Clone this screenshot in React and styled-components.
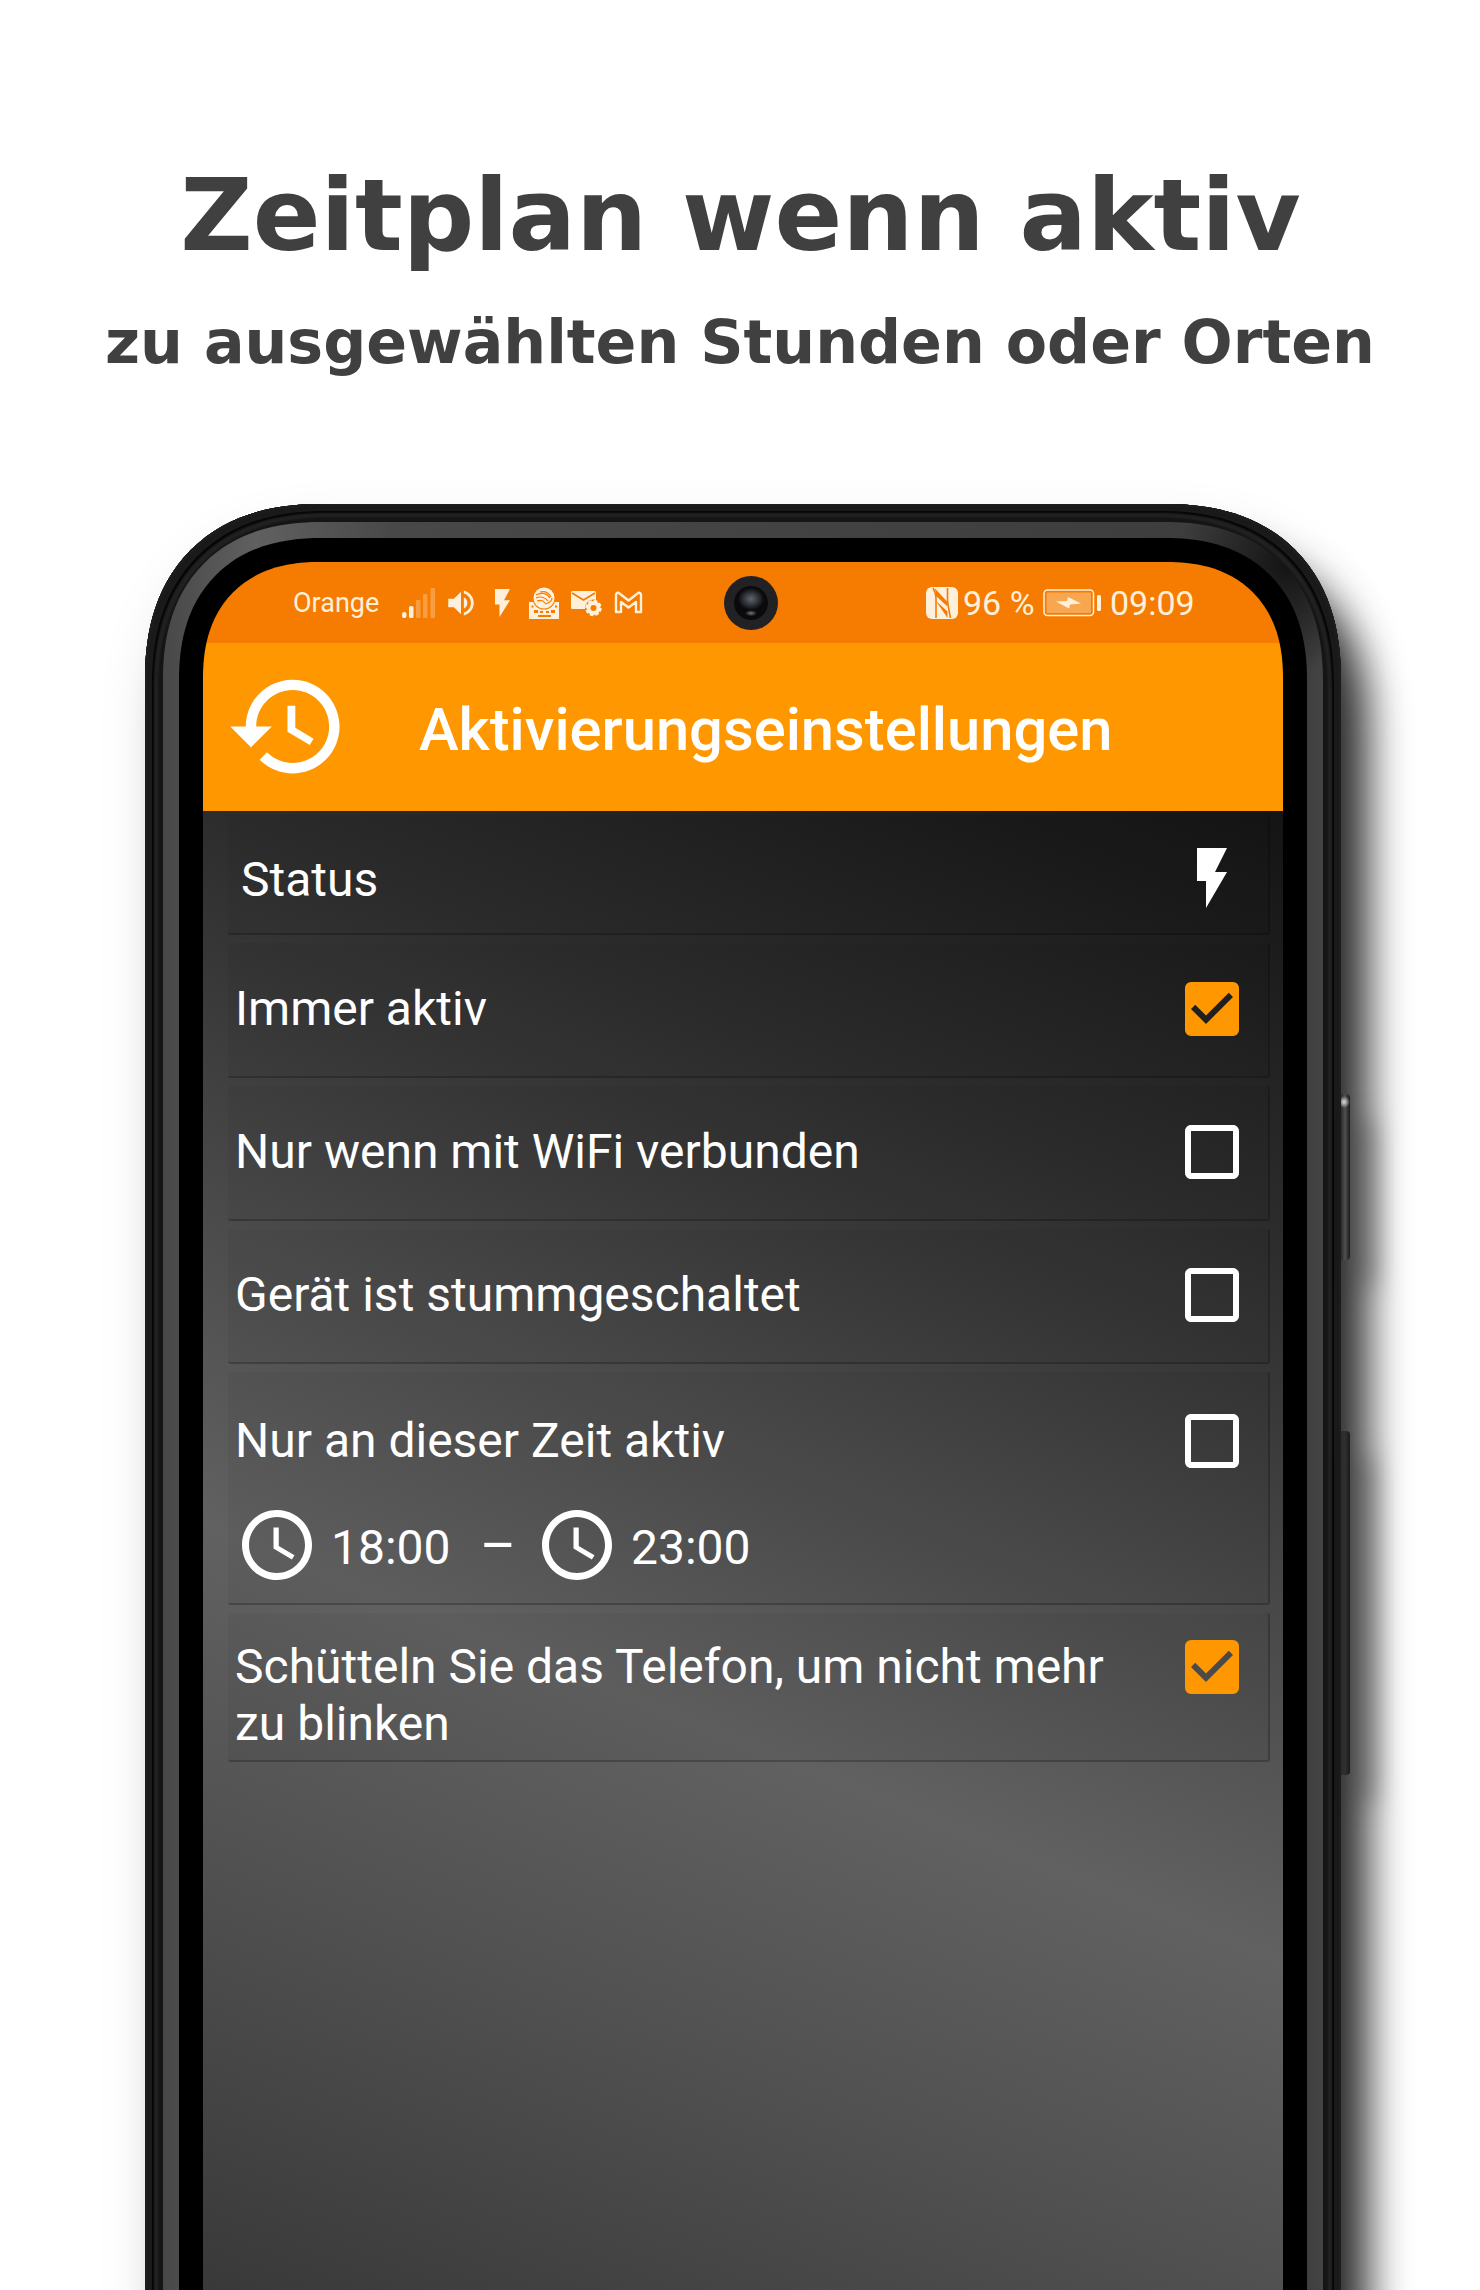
import styled, { createGlobalStyle, css } from 'styled-components';
import {
  MdCheckBox,
  MdCheckBoxOutlineBlank,
  MdVolumeUp,
} from 'react-icons/md';

const GlobalStyle = createGlobalStyle`
  * {
    box-sizing: border-box;
  }

  body {
    margin: 0;
    background: #fff;
  }
`;

// rounder-than-circle corners where the browser knows them
const smoothCorner = (plain, smooth) => css`
  border-radius: ${plain}px ${plain}px 0 0;

  @supports (corner-shape: superellipse(1.2)) {
    border-radius: ${smooth}px ${smooth}px 0 0;
    corner-shape: superellipse(1.2);
  }
`;

const Page = styled.main`
  width: 1480px;
  height: 2290px;
  overflow: hidden;
  background: #fff;
  font-family: Roboto, sans-serif;
`;

const Intro = styled.div`
  height: 504px;
  padding-top: 158px;
  text-align: center;
  color: #404040;
  font-family: 'DejaVu Sans', sans-serif;
  font-weight: 700;
  white-space: nowrap;
`;

const Headline = styled.h1`
  margin: 0;
  padding-left: 1px;
  font-size: 100px;
  line-height: 116px;
`;

const Subline = styled.p`
  margin: 33px 0 0;
  font-size: 60.2px;
  line-height: 70px;
`;

const Phone = styled.div`
  position: relative;
  isolation: isolate;
  width: 1196px;
  height: 1900px;
  margin-left: 145px;
  padding: 18px;
  ${smoothCorner(160, 176)}
  background: #151515;
  box-shadow:
    inset 0 0 2px 2px #1e1e1e,
    inset 0 0 0 7px #1a1a1a,
    inset 0 0 2px 9px #050505,
    inset 0 0 2px 13px #222,
    30px 46px 42px -4px rgba(0, 0, 0, 0.82),
    10px 30px 60px rgba(0, 0, 0, 0.12);
`;

const Rim = styled.div`
  height: 100%;
  padding: 16px;
  ${smoothCorner(142, 158)}
  background:
    radial-gradient(circle at calc(100% - 36px) 42px, #141414, transparent 110px),
    linear-gradient(90deg, #484848 0, #606060 8%, #484848 20%, #3c3c3c 98%, #444 100%);
`;

const Bezel = styled.div`
  height: 100%;
  padding: 24px 24px 0;
  ${smoothCorner(126, 142)}
  background: #000;
`;

const Screen = styled.div`
  height: 1728px;
  ${smoothCorner(104, 116)}
  overflow: hidden;
  color: #fff;
`;

const SideKey = styled.div`
  position: absolute;
  z-index: -1;
  top: ${(props) => props.$top}px;
  left: 1196px;
  width: 9px;
  height: ${(props) => props.$height}px;
  border-radius: 0 4px 4px 0;
  background:
    ${(props) => props.$shine && 'radial-gradient(circle at 3px 8px, #ddd, transparent 6px),'}
    linear-gradient(90deg, #2a2a2a, ${(props) => (props.$shine ? '#505050' : '#303030')} 45%, #1a1a1a);
  box-shadow: 22px 26px 26px rgba(0, 0, 0, 0.5);
`;

const StatusBar = styled.div`
  display: flex;
  align-items: center;
  height: 81px;
  padding-left: 90px;
  background: #f57c00;
  color: #fff0dc;
`;

const Carrier = styled.span`
  width: 109px;
  font-size: 27px;
`;

const Indicators = styled.div`
  display: flex;
  align-items: center;
  width: 322px;
  height: 34px;

  svg {
    flex: none;
  }
`;

const Signal = styled.svg`
  margin-right: 8px;
`;

const SmallBolt = styled.svg`
  margin: 0 18px 0 17px;
`;

const Keyboard = styled.svg`
  margin-right: 10px;
`;

const Mail = styled.svg`
  margin-right: 12px;
`;

const Camera = styled.div`
  width: 54px;
  height: 54px;
  margin-right: 148px;
  padding: 10px;
  border-radius: 50%;
  background: #222224;
`;

const Lens = styled.div`
  width: 34px;
  height: 34px;
  border-radius: 50%;
  background:
    radial-gradient(ellipse 6px 3px at 50% 80%, #77777c, transparent),
    radial-gradient(ellipse 13px 11px at 50% 38%, #62656f, #2a2b31 65%, transparent),
    #0a0a0c;
`;

const Percent = styled.span`
  width: 85px;
  padding-left: 5px;
  font-size: 34px;
  white-space: nowrap;
`;

const Clock = styled.span`
  padding-left: 8px;
  font-size: 34px;
`;

const AppBar = styled.header`
  display: flex;
  align-items: center;
  height: 168px;
  padding: 0 0 2px 22px;
  background: #ff9800;
`;

const Title = styled.h2`
  margin: 7px 0 0 69px;
  font-size: 59.7px;
  font-weight: 500;
  white-space: nowrap;
`;

const Settings = styled.section`
  height: 1479px;
  padding: 4px 13px 0 25px;
  background: linear-gradient(
    202deg,
    #141414 0%,
    #2d2d2d 23%,
    #383838 31%,
    #545454 50%,
    #616161 60%,
    #515151 77%,
    #393939 100%
  );
`;

const Row = styled.div`
  display: flex;
  justify-content: space-between;
  height: ${(props) => props.$height}px;
  margin-bottom: 8px;
  padding: ${(props) => props.$top}px 20px 0 ${(props) => props.$left || 7}px;
  background: rgba(0, 0, 0, 0.04);
  border-right: 2px solid rgba(0, 0, 0, 0.22);
  border-bottom: 2px solid rgba(0, 0, 0, 0.22);
  border-radius: 3px;

  > svg {
    flex: none;
  }
`;

const Label = styled.div`
  max-width: 890px;
  padding-top: ${(props) => props.$top || 7}px;
  font-size: 48px;
  line-height: 57px;
`;

const Times = styled.div`
  display: flex;
  align-items: center;
  height: 84px;
  margin-top: 34px;
`;

const Time = styled.span`
  width: ${(props) => props.$width}px;
  padding: 4px 0 0 12px;
`;

const Dash = styled.span`
  width: 60px;
  padding: 2px 0 0 5px;
  font-size: 55px;
`;

const PALE = '#fff0dc';

const rows = [
  { id: 'always', label: 'Immer aktiv', checked: true, height: 135, top: 30 },
  { id: 'wifi', label: 'Nur wenn mit WiFi verbunden', height: 135, top: 30 },
  { id: 'silent', label: 'Gerät ist stummgeschaltet', height: 135, top: 30 },
  { id: 'time', label: 'Nur an dieser Zeit aktiv', height: 233, top: 33, times: ['18:00', '23:00'] },
  {
    id: 'shake',
    label: 'Schütteln Sie das Telefon, um nicht mehr zu blinken',
    checked: true,
    height: 149,
    top: 18,
  },
];

function BoltIcon() {
  return (
    <svg width="72" height="72" viewBox="0 0 24 24" fill="#fff">
      <path d="M7 2v11h3v9l7-12h-4l4-8z" />
    </svg>
  );
}

function HistoryIcon() {
  return (
    <svg width="125" height="125" viewBox="0 0 24 24" fill="#fff">
      <path d="M13 3c-4.97 0-9 4.03-9 9H1l3.89 3.89.07.14L9 12H6c0-3.87 3.13-7 7-7s7 3.13 7 7-3.13 7-7 7c-1.93 0-3.68-.79-4.94-2.06l-1.42 1.42C8.27 19.99 10.51 21 13 21c4.97 0 9-4.03 9-9s-4.03-9-9-9zm-1 5v5l4.28 2.54.72-1.21-3.5-2.08V8H12z" />
    </svg>
  );
}

function ClockIcon() {
  return (
    <svg width="84" height="84" viewBox="0 0 24 24" fill="#fff">
      <path d="M11.99 2C6.47 2 2 6.48 2 12s4.47 10 9.99 10C17.52 22 22 17.52 22 12S17.52 2 11.99 2zM12 20c-4.42 0-8-3.58-8-8s3.58-8 8-8 8 3.58 8 8-3.58 8-8 8z" />
      <path d="M12.5 7H11v6l5.25 3.15.75-1.23-4.5-2.67z" />
    </svg>
  );
}

function StatusIcons() {
  return (
    <Indicators>
      <Signal width="34" height="32" fill={PALE}>
        <rect x="0" y="25" width="4.5" height="6" rx="2" />
        <rect x="7" y="19" width="4.5" height="12" rx="1.5" />
        <rect x="14" y="13" width="4.5" height="18" rx="1" opacity=".3" />
        <rect x="21" y="7" width="4.5" height="24" rx="1" opacity=".3" />
        <rect x="28.5" y="1" width="4.5" height="30" rx="1" opacity=".3" />
      </Signal>
      <MdVolumeUp size={34} color={PALE} />
      <SmallBolt width="15" height="28" viewBox="7 2 10 20" fill={PALE} preserveAspectRatio="none">
        <path d="M7 2v11h3v9l7-12h-4l4-8z" />
      </SmallBolt>
      <Keyboard width="32" height="32" viewBox="0 0 32 32">
        <path d="M1 15h30v17H1z" fill={PALE} />
        <circle cx="16" cy="11" r="11.5" fill="#f57c00" />
        <circle cx="16" cy="11" r="10.5" fill={PALE} />
        <path
          d="M8 8c5-3 11-2 14 3M8 11c4-2 9-1 12 3M9 14c3-1 6-1 8 2M12 5c5-1 9 1 11 5M24 11c0 3-3 5-7 6"
          stroke="#f57c00"
          strokeWidth="1.2"
          fill="none"
        />
        <path d="M6 23h4v3H6zM12 24h3v2h-3zM18 24h3v2h-3zM23 23h4v3h-4zM10 28h13v2H10zM3.500 18.500h2v2h-2zM27 18.500h2v2h-2z" fill="#f57c00" />
      </Keyboard>
      <Mail width="32" height="28" viewBox="0 0 32 28">
        <rect x="1" y="2" width="25" height="18" rx="1.5" fill={PALE} />
        <path d="M2 4l11.5 7L25 4" stroke="#f57c00" strokeWidth="1.8" fill="none" />
        <circle cx="23.5" cy="19" r="8.5" fill="#f57c00" />
        <circle cx="23.5" cy="19" r="5" fill="none" stroke={PALE} strokeWidth="4" />
        <circle cx="23.5" cy="19" r="7" fill="none" stroke={PALE} strokeWidth="2.5" strokeDasharray="3.5 2" />
      </Mail>
      <svg width="29" height="23" viewBox="0 0 29 23" fill="none" stroke={PALE} strokeWidth="2.4" strokeLinejoin="round">
        <path d="M2 21V4c0-2 2-3 3.500-1.500l9 7 9-7C25 1 27 2 27 4v17h-5V11l-7.500 5.500L7 11v10z" />
      </svg>
    </Indicators>
  );
}

function NfcIcon() {
  return (
    <svg width="32" height="32" viewBox="0 0 32 32">
      <rect width="32" height="32" rx="6" fill={PALE} />
      <path
        d="M7 1c2.500 4 3 6 3 10v20M21.500 1v11c0 4 .5 6 3 19"
        stroke="#f57c00"
        strokeWidth="1.6"
        fill="none"
      />
      <path d="M9 1.500L21.500 15v4.500L10 9zM10 14l11.500 10.500v6.500z" fill="#f57c00" />
    </svg>
  );
}

function BatteryIcon() {
  return (
    <svg width="59" height="28" viewBox="0 0 59 28">
      <rect x="1" y="1" width="49.5" height="25.5" rx="3.5" fill="none" stroke={PALE} strokeWidth="1.5" />
      <rect x="3.5" y="3.5" width="44.5" height="20.5" rx="1" fill={PALE} opacity=".36" />
      <path d="M13 12.500l11-.5 1-4 13 6.500-11 1-1 4z" fill={PALE} />
      <rect x="54" y="6" width="4" height="16" rx="1.5" fill={PALE} />
    </svg>
  );
}

function SettingRow({ item }) {
  const Box = item.checked ? MdCheckBox : MdCheckBoxOutlineBlank;
  return (
    <Row $height={item.height} $top={item.top}>
      <Label>
        {item.label}
        {item.times && (
          <Times>
            <ClockIcon />
            <Time $width={156}>{item.times[0]}</Time>
            <Dash>–</Dash>
            <ClockIcon />
            <Time>{item.times[1]}</Time>
          </Times>
        )}
      </Label>
      <Box size={72} color={item.checked ? '#ff9800' : '#fff'} />
    </Row>
  );
}

export default function App() {
  return (
    <>
      <GlobalStyle />
      <Page>
        <Intro>
          <Headline>Zeitplan wenn aktiv</Headline>
          <Subline>zu ausgewählten Stunden oder Orten</Subline>
        </Intro>
        <Phone>
          <Rim>
            <Bezel>
              <Screen>
                <StatusBar>
                  <Carrier>Orange</Carrier>
                  <StatusIcons />
                  <Camera>
                    <Lens />
                  </Camera>
                  <NfcIcon />
                  <Percent>96 %</Percent>
                  <BatteryIcon />
                  <Clock>09:09</Clock>
                </StatusBar>
                <AppBar>
                  <HistoryIcon />
                  <Title>Aktivierungseinstellungen</Title>
                </AppBar>
                <Settings>
                  <Row $height={120} $top={27} $left={13}>
                    <Label $top={9}>Status</Label>
                    <BoltIcon />
                  </Row>
                  {rows.map((item) => (
                    <SettingRow key={item.id} item={item} />
                  ))}
                </Settings>
              </Screen>
            </Bezel>
          </Rim>
          <SideKey $top={590} $height={166} $shine />
          <SideKey $top={927} $height={344} />
        </Phone>
      </Page>
    </>
  );
}
